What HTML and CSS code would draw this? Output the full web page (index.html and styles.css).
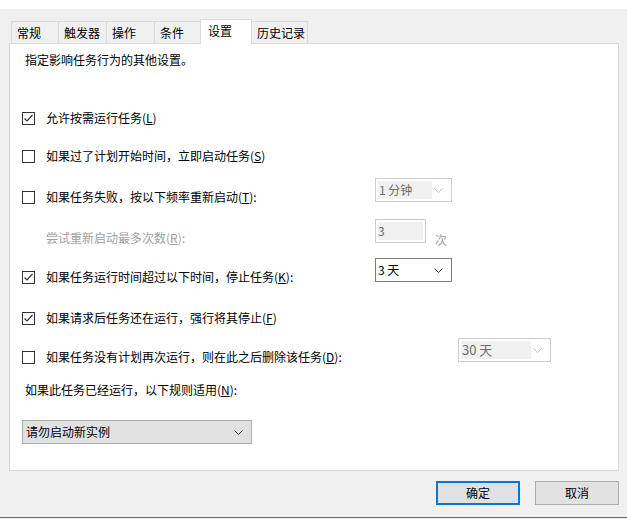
FILE: index.html
```html
<!DOCTYPE html>
<html lang="zh">
<head>
<meta charset="utf-8">
<title>设置</title>
<link rel="stylesheet" href="styles.css">
</head>
<body>
<div class="titlebar"></div>
<div class="tabs">
  <div class="tab w48">常规</div>
  <div class="tab w49">触发器</div>
  <div class="tab w49">操作</div>
  <div class="tab w48">条件</div>
  <div class="tab tab-active">设置</div>
  <div class="tab w57">历史记录</div>
</div>
<div class="panel">
  <div class="desc">指定影响任务行为的其他设置。</div>

  <div class="row r1">
    <label class="opt"><span class="cb checked"><svg viewBox="0 0 13 13" width="13" height="13"><polyline points="2.5,6.5 5,9 10.5,3" fill="none" stroke="#333" stroke-width="1.2"/></svg></span><span class="lbl">允许按需运行任务(<u>L</u>)</span></label>
  </div>

  <div class="row r2">
    <label class="opt"><span class="cb"></span><span class="lbl">如果过了计划开始时间，立即启动任务(<u>S</u>)</span></label>
  </div>

  <div class="row r3">
    <label class="opt"><span class="cb"></span><span class="lbl">如果任务失败，按以下频率重新启动(<u>T</u>):</span></label>
    <div class="dd dd-dis w77"><span class="dd-val">1&nbsp;分钟</span><svg class="chev" viewBox="0 0 9 5" width="9" height="5"><polyline points="0.5,0.5 4.5,4.5 8.5,0.5" fill="none" stroke="#c2c2c2" stroke-width="1"/></svg></div>
  </div>

  <div class="row r4">
    <div class="opt opt-indent"><span class="lbl lbl-dis">尝试重新启动最多次数(<u>R</u>):</span></div>
    <div class="inp inp-dis"><span class="inp-val">3</span></div>
    <span class="unit">次</span>
  </div>

  <div class="row r5">
    <label class="opt"><span class="cb checked"><svg viewBox="0 0 13 13" width="13" height="13"><polyline points="2.5,6.5 5,9 10.5,3" fill="none" stroke="#333" stroke-width="1.2"/></svg></span><span class="lbl">如果任务运行时间超过以下时间，停止任务(<u>K</u>):</span></label>
    <div class="dd dd-on w77"><span class="dd-text">3&nbsp;天</span><svg class="chev" viewBox="0 0 9 5" width="9" height="5"><polyline points="0.5,0.5 4.5,4.5 8.5,0.5" fill="none" stroke="#333" stroke-width="1"/></svg></div>
  </div>

  <div class="row r6">
    <label class="opt"><span class="cb checked"><svg viewBox="0 0 13 13" width="13" height="13"><polyline points="2.5,6.5 5,9 10.5,3" fill="none" stroke="#333" stroke-width="1.2"/></svg></span><span class="lbl">如果请求后任务还在运行，强行将其停止(<u>F</u>)</span></label>
  </div>

  <div class="row r7">
    <label class="opt opt-wide"><span class="cb"></span><span class="lbl">如果任务没有计划再次运行，则在此之后删除该任务(<u>D</u>):</span></label>
    <div class="dd dd-dis w93"><span class="dd-val wide">30&nbsp;天</span><svg class="chev" viewBox="0 0 9 5" width="9" height="5"><polyline points="0.5,0.5 4.5,4.5 8.5,0.5" fill="none" stroke="#c2c2c2" stroke-width="1"/></svg></div>
  </div>

  <div class="row r8">
    <div class="opt opt-plain"><span class="lbl">如果此任务已经运行，以下规则适用(<u>N</u>):</span></div>
  </div>

  <div class="select"><span>请勿启动新实例</span><svg class="chev" viewBox="0 0 9 5" width="9" height="5"><polyline points="0.5,0.5 4.5,4.5 8.5,0.5" fill="none" stroke="#333" stroke-width="1"/></svg></div>
</div>
<div class="buttons">
  <div class="btn btn-default">确定</div>
  <div class="btn">取消</div>
</div>
<div class="bottomline"></div>
</body>
</html>
```
FILE: styles.css
```css
html, body {
  margin: 0;
  padding: 0;
}
body {
  width: 627px;
  height: 519px;
  overflow: hidden;
  background: #f0f0f0;
  font-family: "Noto Sans CJK SC", "Microsoft YaHei", sans-serif;
  font-size: 12px;
  line-height: 16px;
  color: #000;
}
u { text-decoration: underline; text-underline-offset: 1px; }

.titlebar {
  height: 9px;
  background: #fff;
}

.tabs {
  display: flex;
  align-items: flex-end;
  margin: 10px 0 0 11px;
  height: 24px;
}
.tab {
  box-sizing: border-box;
  height: 22px;
  border: 1px solid #d9d9d9;
  border-bottom: none;
  background: #f0f0f0;
  padding: 2px 0 0 5px;
  line-height: 18px;
  margin-right: -1px;
}
.w48 { width: 48px; }
.w49 { width: 49px; }
.w57 { width: 57px; }
.tab-active {
  position: relative;
  z-index: 2;
  width: 52px;
  height: 25px;
  margin-bottom: -1px;
  margin-left: -1px;
  background: #fff;
  padding: 2px 0 0 7px;
}

.panel {
  box-sizing: border-box;
  width: 610px;
  height: 428px;
  margin-left: 9px;
  background: #fff;
  border: 1px solid #d9d9d9;
  padding: 0 0 0 12px;
}
.desc {
  margin: 8px 0 0 3px;
}

.row {
  display: flex;
  align-items: flex-start;
  height: 27px;
}
.r1 { margin-top: 31px; }
.r2 { margin-top: 11px; }
.r3 { margin-top: 14px; }
.r4 { margin-top: 14px; }
.r5 { margin-top: 12px; }
.r6 { margin-top: 14px; }
.r7 { margin-top: 12px; }
.r8 { margin-top: 6px; }

.opt {
  display: flex;
  align-items: center;
  width: 353px;
  flex: none;
  margin-top: 11px;
}
.opt-wide { width: 436px; }
.opt-indent { padding-left: 24px; width: 329px; }
.opt-plain { padding-left: 3px; }

.cb {
  box-sizing: border-box;
  width: 13px;
  height: 13px;
  border: 1px solid #333;
  background: #fff;
  flex: none;
  margin-right: 11px;
  display: flex;
}
.cb svg { margin: -1px; }

.lbl-dis { color: #a0a0a0; }

.dd {
  box-sizing: border-box;
  height: 24px;
  border: 1px solid #ccc;
  background: #fff;
  display: flex;
  align-items: center;
  flex: none;
}
.w77 { width: 77px; }
.w93 { width: 93px; }
.dd-dis .dd-val {
  width: 54px;
  height: 18px;
  margin-left: 2px;
  background: #f0f0f0;
  color: #6d6d6d;
  line-height: 18px;
  padding-left: 1px;
  box-sizing: border-box;
}
.dd-dis .dd-val.wide { width: 70px; font-size: 13px; }
.dd-on { border-color: #7a7a7a; }
.dd-text { margin-left: 2px; width: 55px; }
.chev { margin-left: auto; margin-right: 8px; }

.inp {
  box-sizing: border-box;
  width: 51px;
  height: 24px;
  border: 1px solid #ccc;
  padding: 2px;
  flex: none;
}
.inp-val {
  display: block;
  height: 18px;
  background: #f0f0f0;
  color: #6d6d6d;
  line-height: 18px;
}
.unit {
  margin: 13px 0 0 9px;
  color: #a0a0a0;
}

.select {
  box-sizing: border-box;
  width: 230px;
  height: 24px;
  margin-top: 22px;
  background: #e1e1e1;
  border: 1px solid #adadad;
  display: flex;
  align-items: center;
  padding-left: 3px;
}

.buttons {
  display: flex;
  justify-content: flex-end;
  gap: 15px;
  margin: 10px 8px 0 0;
}
.btn {
  box-sizing: border-box;
  width: 84px;
  height: 24px;
  background: #e1e1e1;
  border: 1px solid #adadad;
  text-align: center;
  line-height: 22px;
}
.btn-default {
  border: 2px solid #0078d7;
  line-height: 20px;
}
.bottomline {
  margin-top: 12px;
  height: 1px;
  background: #6a6a6a;
}
```
